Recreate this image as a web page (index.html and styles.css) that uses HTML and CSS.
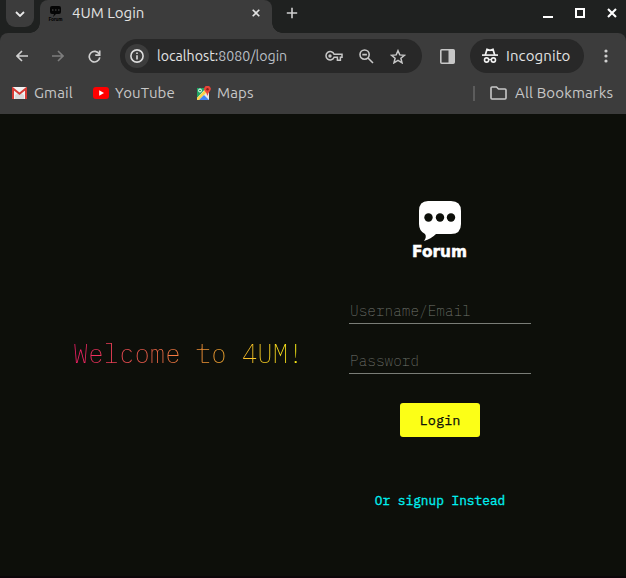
FILE: index.html
```html
<!DOCTYPE html>
<html lang="en">
<head>
<meta charset="utf-8">
<title>4UM Login</title>
<link rel="stylesheet" href="styles.css">
</head>
<body>
<header class="browser">
  <div class="tabstrip">
    <div class="tab-search"><svg width="10" height="6" viewBox="0 0 10 6"><path d="M1 1l4 4 4-4" fill="none" stroke="#e8e8e8" stroke-width="1.8"/></svg></div>
    <div class="tab">
      <svg class="favicon" width="16" height="16" viewBox="0 0 16 16"><path d="M4 1h7q2 0 2 2v4q0 2-2 2H8L5 12l1-3H4Q2 9 2 7V3q0-2 2-2z" fill="#050505"/><path d="M4 5h1.5M7 5h1.5M10 5h1.5" stroke="#555" stroke-width="1.2"/><text x="0.5" y="15.5" font-size="5" font-weight="900" textLength="14" fill="#050505">Forum</text></svg>
      <span class="tab-title">4UM Login</span>
      <svg class="tab-close" width="8" height="8" viewBox="0 0 8 8"><path d="M.7.7l6.6 6.6M7.3.7L.7 7.3" stroke="#e3e3e3" stroke-width="1.6"/></svg>
    </div>
    <svg class="new-tab" width="12" height="12" viewBox="0 0 12 12"><path d="M6 .8v10.4M.8 6h10.4" stroke="#d0d0d0" stroke-width="1.6"/></svg>
    <div class="window-controls">
      <svg width="10" height="10" viewBox="0 0 10 10"><path d="M0 9h10" stroke="#fff" stroke-width="2"/></svg>
      <svg width="10" height="10" viewBox="0 0 10 10"><path d="M1 1h8v8H1z" fill="none" stroke="#fff" stroke-width="2"/></svg>
      <svg width="10" height="10" viewBox="0 0 10 10"><path d="M1 1l8 8M9 1L1 9" stroke="#fff" stroke-width="2.1"/></svg>
    </div>
  </div>
  <div class="toolbar">
    <div class="navigation">
      <svg width="12" height="12" viewBox="0 0 12 12"><path d="M12 6H1.2M6 1L1 6l5 5" fill="none" stroke="#d0d0d0" stroke-width="1.6"/></svg>
      <svg width="12" height="12" viewBox="0 0 12 12"><path d="M0 6h10.8M6 1l5 5-5 5" fill="none" stroke="#7d7d7d" stroke-width="1.6"/></svg>
      <svg width="13" height="13" viewBox="0 0 14 14"><path d="M12.1 4.5A5.7 5.7 0 1 0 12.7 8" fill="none" stroke="#d0d0d0" stroke-width="1.8"/><path d="M12.6.6v5H7.8" fill="none" stroke="#d0d0d0" stroke-width="1.8"/></svg>
    </div>
    <div class="address">
      <div class="site-info"><svg width="14" height="14" viewBox="0 0 14 14"><circle cx="7" cy="7" r="6.1" fill="none" stroke="#ddd" stroke-width="1.6"/><path d="M7 6.3v4.2M7 3.5V5" stroke="#ddd" stroke-width="1.6"/></svg></div>
      <span class="url">localhost:<span>8080/login</span></span>
      <div class="address-icons">
        <svg width="18" height="12" viewBox="0 0 18 12"><path d="M9.1 4.2H17v3h-1.6v3h-3v-3H9.1A4.2 4.2 0 1 1 9.1 4.2z" fill="none" stroke="#c7c7c7" stroke-width="1.5"/><circle cx="5" cy="6" r="1.7" fill="#c7c7c7"/></svg>
        <svg width="15" height="15" viewBox="0 0 15 15"><circle cx="5.6" cy="5.6" r="4.6" fill="none" stroke="#c7c7c7" stroke-width="1.6"/><path d="M9 9l5 5M3.3 5.6h4.6" stroke="#c7c7c7" stroke-width="1.6"/></svg>
        <svg width="16" height="15" viewBox="0 0 16 15"><path d="M8 1.7l1.8 4.2 4.6.4-3.5 3 1.1 4.5L8 11.4l-4 2.4 1.1-4.5-3.5-3 4.6-.4z" fill="none" stroke="#c7c7c7" stroke-width="1.5"/></svg>
      </div>
    </div>
    <svg class="side-panel" width="15" height="15" viewBox="0 0 15 15"><rect x=".8" y=".8" width="13.4" height="13.4" rx="1" fill="none" stroke="#c7c7c7" stroke-width="1.6"/><path d="M8.5 1H14v13H8.5z" fill="#c7c7c7"/></svg>
    <div class="incognito">
      <svg width="16" height="16" viewBox="0 0 16 16"><path d="M0 7.1h16" stroke="#f2f2f2" stroke-width="1.6"/><path d="M3.3 7L5 1.4 8 2.3l3-.9L12.7 7" fill="none" stroke="#f2f2f2" stroke-width="1.7"/><circle cx="4.6" cy="12" r="2.1" fill="none" stroke="#f2f2f2" stroke-width="1.6"/><circle cx="11.4" cy="12" r="2.1" fill="none" stroke="#f2f2f2" stroke-width="1.6"/><path d="M7 11.8q1-.7 2 0" fill="none" stroke="#f2f2f2" stroke-width="1.3"/></svg>
      <span>Incognito</span>
    </div>
    <svg class="menu" width="4" height="14" viewBox="0 0 4 14" fill="#d0d0d0"><circle cx="2" cy="2" r="1.6"/><circle cx="2" cy="7" r="1.6"/><circle cx="2" cy="12" r="1.6"/></svg>
  </div>
  <nav class="bookmarks">
    <svg width="15" height="12" viewBox="0 0 15 12"><path d="M0 0h15v12H0z" fill="#f2f2f2"/><path d="M3 8l4.5-3L12 8v4H3z" fill="#dadada"/><path d="M1 12V1.5l6.5 5.2L14 1.5V12" fill="none" stroke="#d63c35" stroke-width="2"/></svg>
    <span class="gmail">Gmail</span>
    <svg width="16" height="12" viewBox="0 0 16 12"><rect width="16" height="12" rx="3" fill="#f00"/><path d="M6.2 3.3v5.4L11 6z" fill="#fff"/></svg>
    <span class="youtube">YouTube</span>
    <svg width="15" height="15" viewBox="0 0 15 15"><path d="M1 2h12v12H1z" fill="#e8e8e8"/><path d="M1 2h9L1 12z" fill="#20a464"/><path d="M1 12l9-9 2 2-9 9H1z" fill="#fbd34b"/><path d="M3 14l5-5 5 5z" fill="#4285f4"/><path d="M9 8l4-2v7z" fill="#e8e8e8"/><circle cx="4" cy="4.5" r="1.5" fill="none" stroke="#fff"/><path d="M11.4 10Q11 7 9 5.2A3.3 3.3 0 1 1 14 5Q12 7 11.4 10z" fill="#e84538"/><circle cx="11.5" cy="3.3" r="1.2" fill="#8b201b"/></svg>
    <span class="maps">Maps</span>
    <i class="divider"></i>
    <svg width="17" height="14" viewBox="0 0 17 14"><path d="M1 2q0-1 1-1h4.5l2 2H15q1 0 1 1v8q0 1-1 1H2q-1 0-1-1z" fill="none" stroke="#c7c7c7" stroke-width="1.6"/></svg>
    <span class="all">All Bookmarks</span>
  </nav>
</header>
<main class="page">
  <h1 class="welcome">Welcome to 4UM!</h1>
  <form class="login-form">
    <svg class="logo" width="58" height="62" viewBox="0 0 58 62"><path d="M17 1h23q10 0 10 10v13q0 10-10 10H25Q20 39 13 41q3-4 1-7-6-3-6-10V11Q8 1 17 1z" fill="#fff"/><g fill="#0d0f0a"><circle cx="17.5" cy="17.5" r="4.2"/><circle cx="29" cy="17.5" r="4.2"/><circle cx="40" cy="17.5" r="4.2"/></g><text class="logo-text" x="1" y="56.5" textLength="55" lengthAdjust="spacingAndGlyphs">Forum</text></svg>
    <input type="text" placeholder="Username/Email" aria-label="Username/Email">
    <input type="password" placeholder="Password" aria-label="Password">
    <button type="button">Login</button>
    <a>Or signup Instead</a>
  </form>
</main>
</body>
</html>
```
FILE: styles.css
```css
* { box-sizing: border-box; }
body { margin: 0; height: 578px; overflow: hidden; background: #0d0f0a; }
svg { display: block; flex: none; }
.browser { height: 114px; background: #1f2120; color: #c7c7c7; font: 15px/20px "Ubuntu", "Noto Sans", sans-serif; white-space: nowrap; }
.tabstrip { display: flex; height: 33px; padding-left: 6px; }
.tab-search { display: flex; align-items: center; justify-content: center; width: 28px; height: 27px; border-radius: 0 0 9px 9px; background: #3c3c3c; }
.tab { position: relative; display: flex; align-items: center; width: 232px; height: 33px; margin-left: 6px; padding: 0 12px 7px 8px; border-radius: 8px 8px 0 0; background: #3c3c3c; color: #e3e3e3; }
.tab::before, .tab::after { content: ""; position: absolute; bottom: 0; width: 10px; height: 10px; }
.tab::before { left: -10px; background: radial-gradient(circle at 0 0, transparent 9.5px, #3c3c3c 10px); }
.tab::after { right: -10px; background: radial-gradient(circle at 100% 0, transparent 9.5px, #3c3c3c 10px); }
.tab-title { margin-left: 8px; }
.tab-close { margin-left: auto; }
.new-tab { margin: 7px 0 0 14px; }
.window-controls { display: flex; gap: 22px; margin: 8px 9px 0 auto; }
.toolbar { display: flex; align-items: center; height: 46px; padding: 0 18px 0 16px; background: #3c3c3c; border-radius: 8px 8px 0 0; }
.navigation { display: flex; align-items: center; gap: 24px; width: 104px; }
.address { display: flex; align-items: center; width: 302px; height: 34px; padding: 0 16px 0 5px; border-radius: 17px; background: #282828; }
.site-info { display: grid; place-items: center; width: 24px; height: 24px; border-radius: 50%; background: #3c3c3c; }
.url { margin-left: 8px; font-size: 14.2px; color: #e3e3e3; }
.url span { color: #b9bec4; }
.address-icons { display: flex; align-items: center; gap: 16px; margin-left: auto; }
.side-panel { margin-left: 18px; }
.incognito { display: flex; align-items: center; gap: 8px; width: 114px; height: 34px; margin-left: 15px; padding-left: 12px; border-radius: 17px; background: #282828; color: #e3e3e3; font-size: 15px; letter-spacing: .1px; }
.menu { margin-left: auto; }
.bookmarks { display: flex; align-items: center; height: 35px; padding: 0 12px 7px; background: #3c3c3c; letter-spacing: .15px; }
.gmail { width: 40px; margin: 0 19px 0 7px; }
.youtube { width: 62px; margin: 0 19px 0 6px; }
.maps { margin-left: 6px; }
.divider { width: 2px; height: 15px; margin: 0 15px 0 auto; background: #5c5c5c; }
.all { width: 99px; margin-left: 8px; }
.page { display: flex; height: 464px; font-family: "IBM Plex Mono", "Liberation Mono", monospace; border-bottom: 2px solid #0b0609; }
.welcome { width: 231px; height: 36px; margin: 222px 0 0 73px; font-size: 25.6px; line-height: 36px; font-weight: 200; white-space: nowrap; background: linear-gradient(90deg, #f01c66, #fff714); background-clip: text; -webkit-background-clip: text; color: transparent; }
.login-form { display: flex; flex-direction: column; align-items: center; width: 182px; margin: 86px 0 0 45px; }
.logo { overflow: visible; }
.logo-text { font: bold 16px "DejaVu Sans", sans-serif; fill: #fff; stroke: #fff; stroke-width: .5px; }
input { width: 182px; height: 26px; margin: 36px 0 0; padding: 1px; border: 0; border-bottom: 1px solid #7a7d77; background: transparent; color: #eee; font: 200 14.4px/23px "IBM Plex Mono", "Liberation Mono", monospace; }
input + input { margin-top: 24px; }
input::placeholder { color: #747770; opacity: 1; }
button { width: 80px; height: 34px; margin-top: 29px; padding: 0; border: 0; border-radius: 3px; background: #fcff17; color: #0d0f0a; font: 13.6px "IBM Plex Mono", "Liberation Mono", monospace; -webkit-text-stroke: .25px #0d0f0a; }
.login-form a { margin-top: 54px; color: #00f0f0; font-size: 12.8px; line-height: 20px; white-space: nowrap; -webkit-text-stroke: .3px #00f0f0; }
```
